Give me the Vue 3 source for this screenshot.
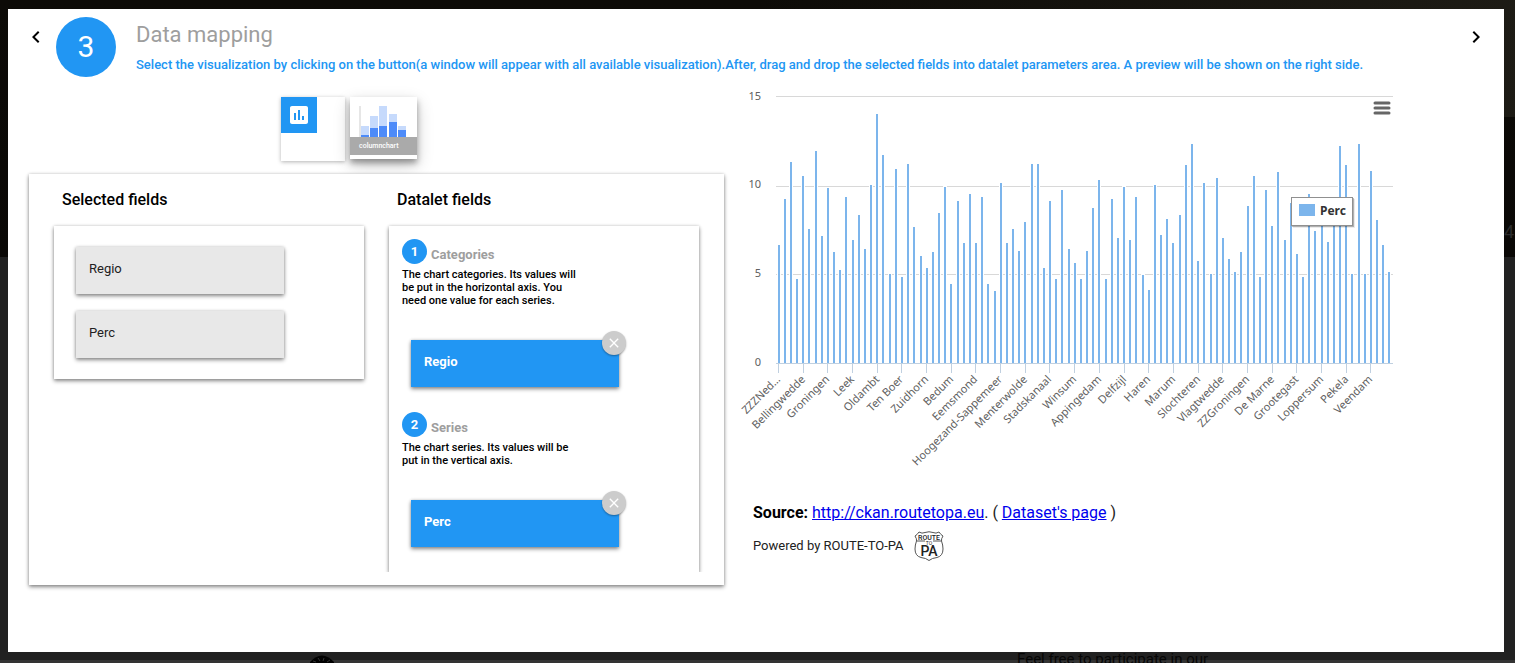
<script setup>
import { ref } from 'vue'

const BASE = 363
const STEP = 6.17

const heights = [
  118, 164, 201, 84, 187, 134, 212, 127, 175, 111, 93, 166, 123, 148, 114, 178, 249, 208, 89, 194,
  86, 199, 136, 107, 95, 111, 150, 176, 79, 162, 120, 169, 120, 166, 79, 72, 180, 120, 134, 112,
  141, 199, 199, 95, 162, 84, 173, 114, 100, 84, 112, 155, 183, 84, 164, 125, 176, 123, 166, 88,
  73, 178, 128, 144, 120, 148, 198, 219, 102, 180, 89, 185, 125, 104, 91, 111, 157, 187, 86, 173,
  137, 191, 123, 160, 109, 86, 169, 132, 150, 121, 150, 217, 198, 89, 219, 89, 192, 143, 118, 91,
]
const bars = heights.map((h, i) => ({ x: Math.floor(778.1 + STEP * i), y: BASE - h, h }))

const names = [
  'ZZZNed…', 'Bellingwedde', 'Groningen', 'Leek', 'Oldambt', 'Ten Boer', 'Zuidhorn', 'Bedum',
  'Eemsmond', 'Hoogezand-Sappemeer', 'Menterwolde', 'Stadskanaal', 'Winsum', 'Appingedam',
  'Delfzijl', 'Haren', 'Marum', 'Slochteren', 'Vlagtwedde', 'ZZGroningen', 'De Marne',
  'Grootegast', 'Loppersum', 'Pekela', 'Veendam',
]
const ticks = names.map((name, k) => ({ name, x: Math.round(778 + STEP * 4 * k) }))

const grid = [
  { label: '15', y: 96, text: 100 },
  { label: '10', y: 186, text: 188 },
  { label: '5', y: 274, text: 277 },
]

const selected = ['Regio', 'Perc']
const params = ref([
  {
    title: 'Categories',
    text: 'The chart categories. Its values will be put in the horizontal axis. You need one value for each series.',
    field: 'Regio',
  },
  {
    title: 'Series',
    text: 'The chart series. Its values will be put in the vertical axis.',
    field: 'Perc',
  },
])

const thumb = [
  { x: 361, top: 126, mid: 135 },
  { x: 370, top: 116, mid: 128 },
  { x: 379, top: 106, mid: 126 },
  { x: 389, top: 114, mid: 122 },
  { x: 398, top: 126, mid: 130 },
]
</script>

<template>
  <div class="stage">
    <span class="behind-number" aria-hidden="true">4</span>
    <svg class="behind-logo" viewBox="0 0 26 14" aria-hidden="true">
      <path d="M1 9Q13-4 25 9V14H1Z" />
      <path class="cut" d="M4 8l3 1M9 5l2 3M15 5l-1 3M21 7l-3 2M6 12h14" />
    </svg>
    <span class="behind-text" aria-hidden="true">Feel free to participate in our</span>

    <main class="modal">
      <header class="head">
        <button class="nav" aria-label="Previous step">
          <svg viewBox="0 0 24 24"><path d="M15.41 7.41L14 6l-6 6 6 6 1.41-1.41L10.83 12z" /></svg>
        </button>
        <div class="step">3</div>
        <div class="titles">
          <h1>Data mapping</h1>
          <p>Select the visualization by clicking on the button(a window will appear with all available visualization).After, drag and drop the selected fields into datalet parameters area. A preview will be shown on the right side.</p>
        </div>
        <button class="nav" aria-label="Next step">
          <svg viewBox="0 0 24 24"><path d="M10 6L8.59 7.41 13.17 12l-4.58 4.59L10 18l6-6z" /></svg>
        </button>
      </header>

      <div class="body">
        <section class="left">
          <div class="tiles">
            <div class="tile">
              <button class="pick" aria-label="Choose visualization">
                <svg viewBox="0 0 24 24"><path d="M19 3H5c-1.1 0-2 .9-2 2v14c0 1.1.9 2 2 2h14c1.1 0 2-.9 2-2V5c0-1.1-.9-2-2-2zM9 17H7v-7h2v7zm4 0h-2V7h2v10zm4 0h-2v-4h2v4z" /></svg>
              </button>
            </div>
            <figure class="datalet">
              <svg viewBox="350 97 67 40" aria-hidden="true">
                <rect x="359" y="106" width="2" height="31" fill="#e6e6e6" />
                <template v-for="b in thumb" :key="b.x">
                  <rect :x="b.x" :y="b.top" width="8" :height="137 - b.top" fill="#c6dafc" />
                  <rect :x="b.x" :y="b.mid" width="8" :height="137 - b.mid" fill="#4d8bf9" />
                </template>
              </svg>
              <figcaption>columnchart</figcaption>
            </figure>
          </div>

          <div class="panel">
            <div class="col">
              <h2>Selected fields</h2>
              <div class="card fields">
                <button v-for="f in selected" :key="f" class="field">{{ f }}</button>
              </div>
            </div>
            <div class="col">
              <h2>Datalet fields</h2>
              <div class="card params">
                <section v-for="(p, i) in params" :key="p.title" class="param">
                  <h3><span class="num">{{ i + 1 }}</span><span>{{ p.title }}</span></h3>
                  <p>{{ p.text }}</p>
                  <div class="drop">
                    {{ p.field }}
                    <button class="remove" :aria-label="'Remove ' + p.field">
                      <svg viewBox="0 0 24 24"><path d="M19 6.41L17.59 5 12 10.59 6.41 5 5 6.41 10.59 12 5 17.59 6.41 19 12 13.41 17.59 19 19 17.59 13.41 12z" /></svg>
                    </button>
                  </div>
                </section>
              </div>
            </div>
          </div>
        </section>

        <section class="right">
          <div class="chart">
            <svg class="plot" viewBox="738 88 660 392" role="img" aria-label="Column chart of Perc by Regio">
              <g v-for="g in grid" :key="g.label">
                <rect x="776" :y="g.y" width="617" height="1" fill="#d8d8d8" />
                <text class="axis" x="761" :y="g.text" text-anchor="end">{{ g.label }}</text>
              </g>
              <text class="axis" x="761" y="366" text-anchor="end">0</text>
              <rect v-for="b in bars" :key="'w' + b.x" :x="b.x - 1" :y="b.y - 1" width="4" :height="b.h + 1" fill="#fff" />
              <rect v-for="b in bars" :key="b.x" :x="b.x" :y="b.y" width="2" :height="b.h" fill="#7cb5ec" />
              <rect x="776" y="363" width="617" height="1" fill="#c0d0e0" />
              <g v-for="t in ticks" :key="t.name">
                <rect :x="t.x" y="364" width="1" height="9" fill="#c0d0e0" />
                <text class="axis" text-anchor="end" :transform="`translate(${t.x + 3} 380) rotate(-45)`">{{ t.name }}</text>
              </g>
              <g>
                <rect x="1293" y="199" width="62" height="29" fill="#000" opacity=".08" />
                <rect x="1292" y="198" width="62" height="29" fill="#000" opacity=".25" />
                <rect x="1291.5" y="197.5" width="61" height="28" fill="#fff" stroke="#909090" />
                <rect x="1299" y="204" width="16" height="12" fill="#7cb5ec" />
                <text class="legend" x="1320" y="215">Perc</text>
              </g>
            </svg>
            <button class="menu" aria-label="Chart context menu">
              <svg viewBox="0 0 18 14"><path d="M2 2h14M2 7h14M2 12h14" /></svg>
            </button>
          </div>
          <p class="source"><b>Source:</b> <a href="#source">http://ckan.routetopa.eu</a>. ( <a href="#dataset">Dataset's page</a> )</p>
          <p class="powered">
            <span>Powered by ROUTE-TO-PA</span>
            <svg viewBox="0 0 30 30" role="img" aria-label="Route to PA">
              <path d="M5 1Q8 3 11 1.500Q15 0 19 1.500Q22 3 25 1Q27 4 29 5Q27 8 27.500 10Q29 14 29 18Q29 25 23 26.500Q18 27 15 29.500Q12 27 7 26.500Q1 25 1 18Q1 14 2.500 10Q3 8 1 5Q3 4 5 1ZM3 10H11M19 10H27" />
              <text x="15" y="8.500" class="t-route">ROUTE</text>
              <text x="15" y="14" class="t-to">TO</text>
              <text x="15" y="25" class="t-pa">PA</text>
            </svg>
          </p>
        </section>
      </div>
    </main>
  </div>
</template>

<style>
body {
  background: #212121;
}
</style>

<style scoped>
* {
  box-sizing: border-box;
}
.stage {
  position: relative;
  display: flex;
  min-height: 100vh;
  padding: 9px 11px 11px 8px;
  overflow: hidden;
  font-family: Roboto, "Liberation Sans", sans-serif;
  color: #000;
  background:
    linear-gradient(#333, #333) bottom / 100% 3px no-repeat,
    linear-gradient(to right, transparent 50%, rgba(40, 38, 30, .6)) top / 100% 117px no-repeat,
    linear-gradient(#0d0b07, #0a0806 257px, #212121 257px);
}
.behind-number,
.behind-text,
.behind-logo {
  position: absolute;
}
.behind-number {
  right: 1px;
  top: 221px;
  font-size: 18px;
  color: #2b2b2b;
}
.behind-text {
  left: 67%;
  bottom: -6px;
  margin-left: 2px;
  font-size: 15px;
  line-height: 20px;
  color: #050505;
}
.behind-logo {
  left: 309px;
  bottom: -4px;
  width: 26px;
  fill: #000;
}
.behind-logo .cut {
  fill: none;
  stroke: #333;
}
.modal {
  position: relative;
  flex: 1;
  min-width: 0;
  background: #fff;
}
button {
  padding: 0;
  border: 0;
  font: inherit;
  color: inherit;
  background: none;
  cursor: pointer;
}
h1, h2, h3, p, figure {
  margin: 0;
}
svg {
  display: block;
}
.head {
  display: flex;
  align-items: flex-start;
  padding: 8px 16px 0;
}
.nav {
  width: 24px;
  height: 24px;
  margin-top: 8px;
}
.step {
  flex: none;
  width: 60px;
  height: 60px;
  margin: 0 20px 0 8px;
  border-radius: 50%;
  background: #2196f3;
  color: #fff;
  font-size: 30px;
  line-height: 60px;
  text-align: center;
}
.titles {
  flex: 1;
}
h1 {
  margin-top: 2px;
  font-size: 22px;
  font-weight: 400;
  line-height: 32px;
  color: #9e9e9e;
}
.titles p {
  margin-top: 4px;
  font-size: 13px;
  font-weight: 500;
  line-height: 20px;
  color: #2196f3;
}
.body {
  display: grid;
  grid-template-columns: 695fr 660fr;
  column-gap: 14px;
  padding: 11px 106px 0 21px;
}
.tiles {
  display: flex;
  gap: 5px;
  padding: 9px 0 13px 252px;
}
.tile {
  width: 64px;
  height: 64px;
  background: #fff;
  box-shadow: 0 1px 4px rgba(0, 0, 0, .3);
}
.pick {
  display: block;
  width: 36px;
  height: 36px;
  padding: 6px;
  background: #2196f3;
}
.pick svg {
  fill: #fff;
}
.datalet {
  width: 67px;
  height: 62px;
  background: #fff;
  box-shadow: 0 4px 6px rgba(0, 0, 0, .35), 0 6px 16px rgba(0, 0, 0, .2);
}
.datalet figcaption {
  height: 18px;
  padding-left: 9px;
  background: #aaa;
  color: #fff;
  font-size: 7px;
  font-weight: 500;
  line-height: 18px;
}
.panel,
.card,
.field,
.drop {
  box-shadow: 0 2px 4px rgba(0, 0, 0, .45), 0 0 3px rgba(0, 0, 0, .15);
}
.panel {
  position: relative;
  display: grid;
  grid-template-columns: 1fr 1fr;
  column-gap: 25px;
  padding: 11px 25px 13px;
  background: #fff;
}
h2 {
  padding-left: 8px;
  margin-bottom: 11px;
  font-size: 16px;
  font-weight: 500;
  line-height: 30px;
}
.fields {
  display: grid;
  gap: 17px;
  padding: 21px 80px 21px 22px;
}
.field {
  height: 47px;
  padding: 0 13px 4px;
  background: #e8e8e8;
  color: #212121;
  font-size: 13px;
  text-align: left;
}
.params {
  padding: 13px 73px 25px 13px;
  clip-path: inset(-6px -6px 0 -6px);
}
.param + .param {
  margin-top: 25px;
}
h3 {
  display: flex;
  gap: 4px;
  color: #9e9e9e;
  font-size: 13px;
  font-weight: 700;
  line-height: 31px;
  height: 29px;
}
.num {
  width: 25px;
  height: 25px;
  border-radius: 50%;
  background: #2196f3;
  color: #fff;
  line-height: 25px;
  text-align: center;
}
.param p {
  max-width: 180px;
  font-size: 11px;
  font-weight: 500;
  line-height: 13px;
}
.drop {
  position: relative;
  height: 47px;
  margin: 33px 7px 0 9px;
  padding: 0 13px;
  background: #2196f3;
  color: #fff;
  font-size: 13px;
  font-weight: 700;
  line-height: 43px;
}
.remove {
  position: absolute;
  top: -9px;
  right: -7px;
  width: 24px;
  height: 24px;
  padding: 4px;
  border-radius: 50%;
  background: #ccc;
  box-shadow: 0 1px 2px rgba(0, 0, 0, .35);
}
.remove svg {
  fill: #fff;
}
.chart {
  position: relative;
}
.plot {
  width: 100%;
}
.axis {
  font-family: "Noto Sans", "DejaVu Sans", sans-serif;
  font-size: 11px;
  fill: #606060;
}
.legend {
  font-family: "Noto Sans", "DejaVu Sans", sans-serif;
  font-size: 12px;
  font-weight: 700;
  fill: #333;
}
.menu {
  position: absolute;
  top: 13px;
  right: 7px;
  width: 18px;
}
.menu svg {
  fill: none;
  stroke: #666;
  stroke-width: 3;
  stroke-linecap: round;
}
.source {
  margin: 23px 0 0 15px;
  font-size: 16px;
  line-height: 20px;
  color: #212121;
}
.source b {
  color: #000;
}
.source a {
  color: #00e;
}
.powered {
  display: flex;
  align-items: center;
  gap: 10px;
  margin: 8px 0 0 15px;
  font-size: 13px;
  line-height: 20px;
  color: #212121;
}
.powered svg {
  width: 30px;
  height: 30px;
  fill: #fff;
  stroke: #555;
}
.powered text {
  fill: #222;
  stroke: none;
  text-anchor: middle;
}
.t-route {
  font-size: 7px;
  font-weight: 500;
}
.t-to {
  font-size: 5px;
}
.t-pa {
  font-size: 14px;
  font-weight: 500;
}
</style>
